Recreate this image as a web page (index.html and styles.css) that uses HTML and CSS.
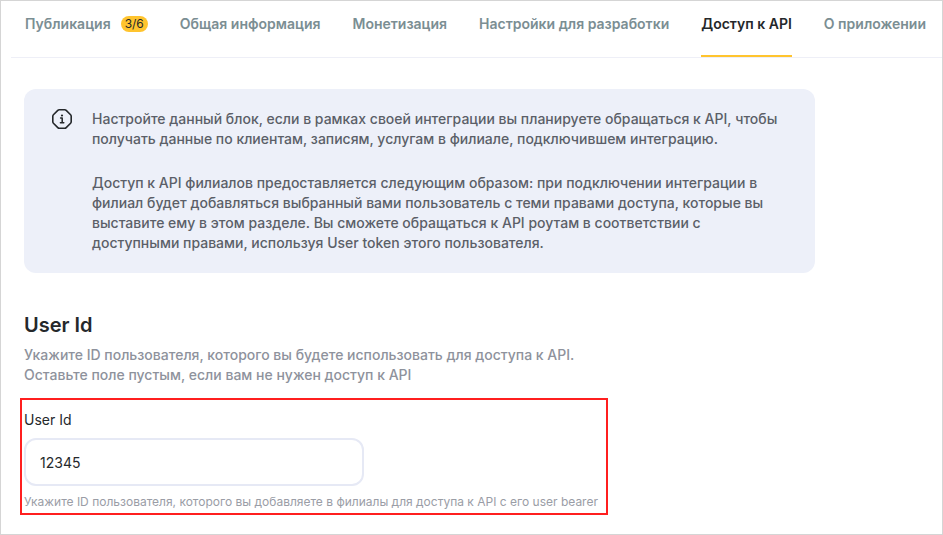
FILE: index.html
```html
<!DOCTYPE html>
<html lang="ru">
<head>
<meta charset="utf-8">
<meta name="viewport" content="width=device-width, initial-scale=1">
<title>Доступ к API</title>
<link rel="stylesheet" href="styles.css">
</head>
<body>
<div class="page">
  <nav class="tabs">
    <a class="tab" href="#publication">Публикация<span class="badge">3/6</span></a>
    <a class="tab" href="#general">Общая информация</a>
    <a class="tab" href="#monetization">Монетизация</a>
    <a class="tab" href="#development">Настройки для разработки</a>
    <a class="tab tab-active" href="#api" aria-current="page">Доступ к API</a>
    <a class="tab" href="#about">О приложении</a>
  </nav>
  <main class="content">
    <section class="notice">
      <svg class="notice-icon" viewBox="0 0 20 20" fill="none" stroke="currentColor" stroke-linejoin="round" stroke-linecap="round" aria-hidden="true">
        <path d="M7.200 .8h5.600q.8 0 1.400.6l4.400 4.400q.6.600.6 1.400v5.600q0 .8-.6 1.400l-4.400 4.400q-.6.600-1.400.6H7.200q-.8 0-1.400-.6L1.400 14.200q-.6-.6-.6-1.400V7.200q0-.8.6-1.400l4.400-4.400q.6-.6 1.400-.6z" stroke-width="1.600"/>
        <path d="M8.600 9h1.600v4.600M8.400 13.700h3.400" stroke-width="1.500"/>
        <circle cx="10" cy="6.500" r="1.100" fill="currentColor" stroke="none"/>
      </svg>
      <div class="notice-text">
        <p>Настройте данный блок, если в рамках своей интеграции вы планируете обращаться к API, чтобы получать данные по клиентам, записям, услугам в филиале, подключившем интеграцию.</p>
        <p>Доступ к API филиалов предоставляется следующим образом: при подключении интеграции в филиал будет добавляться выбранный вами пользователь с теми правами доступа, которые вы выставите ему в этом разделе. Вы сможете обращаться к API роутам в соответствии с доступными правами, используя User token этого пользователя.</p>
      </div>
    </section>
    <h1 class="title">User Id</h1>
    <p class="lead">Укажите ID пользователя, которого вы будете использовать для доступа к API.<br>Оставьте поле пустым, если вам не нужен доступ к API</p>
    <div class="field">
      <label class="field-label" for="user-id">User Id</label>
      <input class="field-input" id="user-id" type="text" value="12345" aria-describedby="user-id-hint">
      <p class="field-hint" id="user-id-hint">Укажите ID пользователя, которого вы добавляете в филиалы для доступа к API с его user bearer</p>
    </div>
  </main>
</div>
</body>
</html>
```
FILE: styles.css
```css
* {
  box-sizing: border-box;
}

body {
  margin: 0;
  background: #fff;
  color: #25282b;
  font: 14px/20px Inter, "Noto Sans", sans-serif;
}

h1,
p {
  margin: 0;
}

.page {
  min-height: 100vh;
  border: 1px solid #d5d5d5;
}

.tabs {
  display: flex;
  gap: 32px;
  margin-left: 10px;
  padding-left: 14px;
  border-bottom: 1px solid #eeeff7;
}

.tab {
  display: flex;
  align-items: center;
  gap: 10px;
  padding: 13px 0 21px;
  border-bottom: 2px solid transparent;
  color: #7b8e93;
  font-weight: 600;
  white-space: nowrap;
  text-decoration: none;
}

.tab-active {
  border-bottom-color: #ffc42e;
  color: #25282b;
}

.badge {
  padding: 0 4px;
  border-radius: 8px;
  background: #ffc42e;
  color: #25282b;
  font-size: 12px;
  font-weight: 400;
  line-height: 16px;
}

.content {
  padding: 31px 23px 19px;
}

.notice {
  display: flex;
  gap: 20px;
  max-width: 791px;
  padding: 20px 28px;
  border-radius: 12px;
  background: #edf0f9;
  color: #5b5f68;
  font-weight: 500;
}

.notice-icon {
  flex: none;
  width: 20px;
  height: 20px;
  color: #25282b;
}

.notice-text {
  display: grid;
  gap: 24px;
}

.title {
  margin-top: 40px;
  font-size: 20px;
  font-weight: 600;
  line-height: 24px;
}

.lead {
  margin-top: 8px;
  color: #8e929c;
  font-weight: 500;
}

.field {
  display: flex;
  flex-direction: column;
  max-width: 588px;
  margin: 13px 0 0 -4px;
  padding: 10px 2px 3px;
  border: 2px solid #ff1f1f;
}

.field-input {
  width: 340px;
  max-width: 100%;
  height: 48px;
  margin: 8px 0;
  padding: 0 14px;
  border: 2px solid #e6e9f5;
  border-radius: 12px;
  background: #fff;
  color: inherit;
  font: inherit;
}

.field-hint {
  color: #9a9da6;
  font-size: 12px;
  line-height: 16px;
}
```
